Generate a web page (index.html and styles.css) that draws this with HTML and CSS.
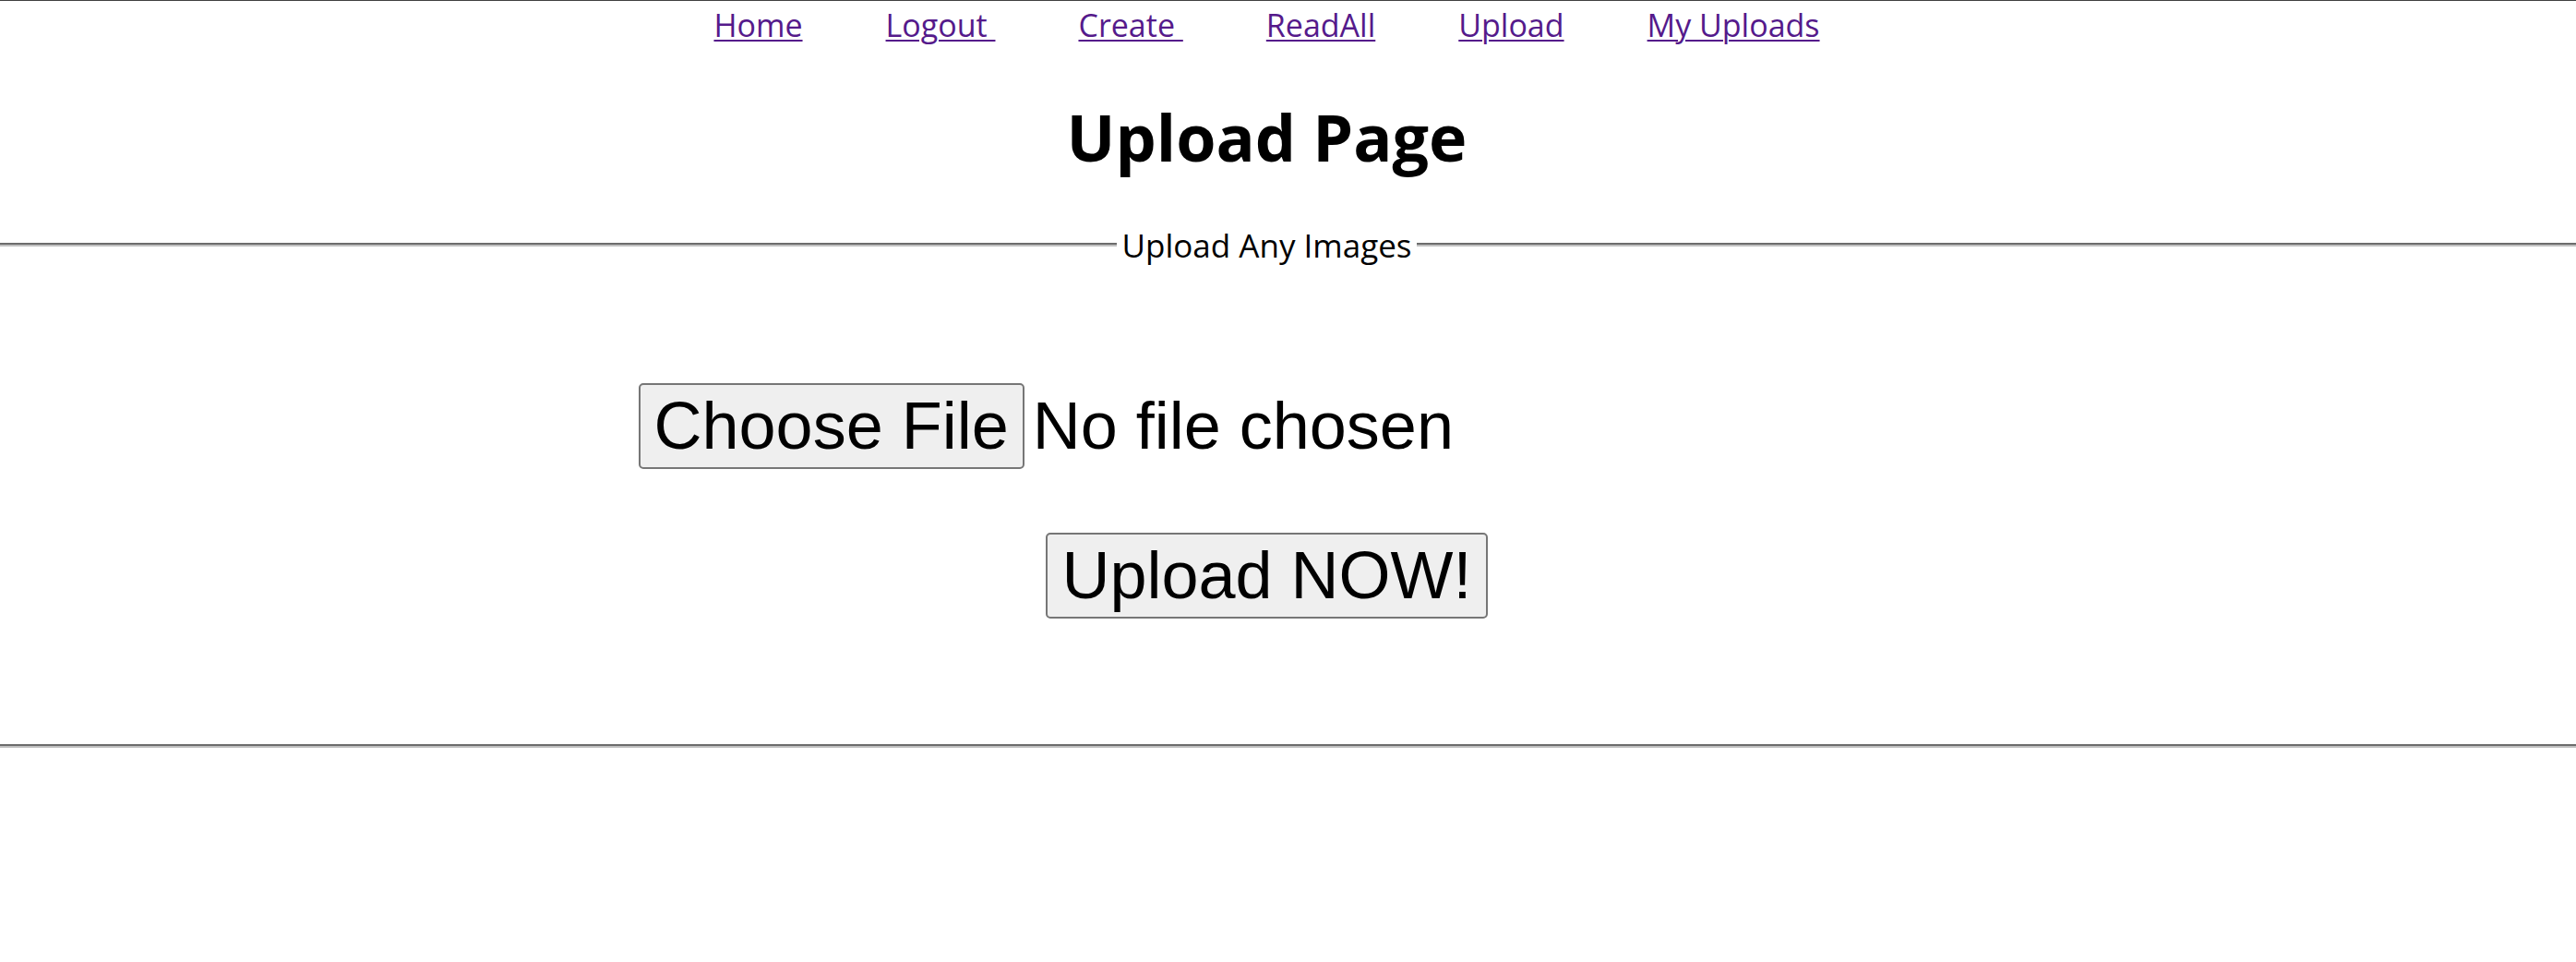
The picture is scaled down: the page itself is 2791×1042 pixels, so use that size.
FILE: index.html
```html
<!DOCTYPE html>
<html lang="en">
<head>
<meta charset="utf-8">
<title>Upload Page</title>
<link rel="stylesheet" href="styles.css">
</head>
<body>
<main class="page">
  <nav class="topnav">
    <a class="navlink" href="#">Home</a>
    <a class="navlink" href="#">Logout&nbsp;</a>
    <a class="navlink" href="#">Create&nbsp;</a>
    <a class="navlink" href="#">ReadAll</a>
    <a class="navlink" href="#">Upload</a>
    <a class="navlink" href="#">My Uploads</a>
  </nav>
  <h1 class="title">Upload Page</h1>
  <fieldset class="upload-box">
    <legend class="upload-legend">Upload Any Images</legend>
    <form class="upload-form" action="#" onsubmit="return false;">
      <label class="file-row">
        <span class="btn file-btn">Choose File</span>
        <span class="file-name">No file chosen</span>
        <input class="file-input" type="file" name="image">
      </label>
      <div class="submit-row">
        <button class="btn submit-btn" type="submit">Upload NOW!</button>
      </div>
    </form>
  </fieldset>
</main>
</body>
</html>
```
FILE: styles.css
```css
html, body {
  margin: 0;
  padding: 0;
  background: #ffffff;
}

body {
  border-top: 1px solid #404040;
  font-family: "Open Sans", "Noto Sans", sans-serif;
  color: #000000;
  overflow: hidden;
}

.page {
  padding-right: 46px;
}

.topnav {
  display: flex;
  justify-content: center;
  gap: 90px;
  padding-top: 3px;
  font-size: 34px;
  line-height: 46px;
}

.navlink {
  color: #551a8b;
  text-decoration: underline;
  text-decoration-thickness: 2px;
  text-underline-offset: 3px;
  white-space: nowrap;
}

.title {
  margin: 52px 0 47px;
  text-align: center;
  font-size: 70px;
  line-height: 92px;
  font-weight: 700;
}

.upload-box {
  margin: 0 -46px 0 0;
  padding: 126px 46px 136px 0;
  border-style: groove;
  border-color: rgb(192, 192, 192);
  border-width: 4px 0;
  min-width: 0;
}

.upload-legend {
  margin: 0 auto;
  padding: 2px 6px 0;
  font-size: 35px;
  line-height: 46px;
}

.upload-form {
  margin: 0;
}

.file-row {
  display: flex;
  align-items: baseline;
  gap: 9px;
  width: 1362px;
  margin: 0 auto;
}

.file-input {
  display: none;
}

.btn {
  display: inline-block;
  font-family: "Liberation Sans", Arial, sans-serif;
  font-size: 72px;
  line-height: 83px;
  color: #000000;
  background: #efefef;
  border: 2px solid #767676;
  border-radius: 5px;
  padding: 3px 15px;
  margin: 0;
}

.file-name {
  font-family: "Liberation Sans", Arial, sans-serif;
  font-size: 72px;
  line-height: 83px;
}

.submit-row {
  margin-top: 69px;
  text-align: center;
}

.submit-btn {
  cursor: pointer;
}
```
